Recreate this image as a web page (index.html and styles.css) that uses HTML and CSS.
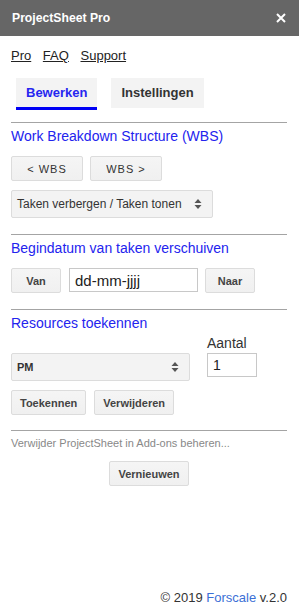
FILE: index.html
```html
<!DOCTYPE html>
<html>
<head>
  <title>ProjectSheet Pro</title>
  <link rel="stylesheet" href="styles.css">
</head>
<body>
  <div class="header">
    <span class="header-title">ProjectSheet Pro</span>
    <svg class="close" width="10" height="10" viewBox="0 0 10 10">
      <path d="M1 1 L9 9 M9 1 L1 9" stroke="#fff" stroke-width="2"/>
    </svg>
  </div>

  <div class="content">
    <div class="links">
      <a href="#">Pro</a>
      <a href="#">FAQ</a>
      <a href="#">Support</a>
    </div>

    <div class="tabs">
      <div class="tab active">Bewerken</div>
      <div class="tab">Instellingen</div>
    </div>

    <div class="divider"></div>
    <h3 class="section-title">Work Breakdown Structure (WBS)</h3>
    <div class="row">
      <button class="btn btn-wbs">&lt; WBS</button>
      <button class="btn btn-wbs">WBS &gt;</button>
    </div>
    <div class="select select-wbs">
      <span>Taken verbergen / Taken tonen</span>
      <svg width="8" height="12" viewBox="0 0 8 12">
        <path d="M4 1 L7.5 5 L0.5 5 Z M4 11 L7.5 7 L0.5 7 Z" fill="#555"/>
      </svg>
    </div>

    <div class="divider"></div>
    <h3 class="section-title">Begindatum van taken verschuiven</h3>
    <div class="row">
      <button class="btn btn-small">Van</button>
      <input class="input input-date" type="text" value="dd-mm-jjjj">
      <button class="btn btn-small">Naar</button>
    </div>

    <div class="divider"></div>
    <h3 class="section-title tight">Resources toekennen</h3>
    <div class="resource-row">
      <div class="resource-left">
        <div class="select select-pm">
          <span>PM</span>
          <svg width="8" height="12" viewBox="0 0 8 12">
            <path d="M4 1 L7.5 5 L0.5 5 Z M4 11 L7.5 7 L0.5 7 Z" fill="#555"/>
          </svg>
        </div>
      </div>
      <div class="resource-right">
        <label class="amount-label">Aantal</label>
        <input class="input input-amount" type="text" value="1">
      </div>
    </div>
    <div class="row row-assign">
      <button class="btn">Toekennen</button>
      <button class="btn">Verwijderen</button>
    </div>

    <div class="divider"></div>
    <p class="note">Verwijder ProjectSheet in Add-ons beheren...</p>
    <div class="center">
      <button class="btn">Vernieuwen</button>
    </div>
  </div>

  <div class="footer">
    &copy; 2019 <a href="#">Forscale</a> v.2.0
  </div>
</body>
</html>
```

FILE: styles.css
```css
html, body {
  height: 100%;
}
body {
  margin: 0;
  font-family: "Liberation Sans", Arial, sans-serif;
  color: #222;
  background: #fff;
  display: flex;
  flex-direction: column;
}
.header {
  height: 36px;
  background: #666;
  display: flex;
  align-items: center;
  justify-content: space-between;
  padding: 0 13px 0 12px;
  flex-shrink: 0;
}
.header-title {
  color: #fff;
  font-weight: bold;
  font-size: 12.2px;
}
.content {
  padding: 12px 12px 0 11px;
}
.links {
  font-size: 13px;
  line-height: 16px;
}
.links a {
  color: #222;
  margin-right: 8px;
}
.tabs {
  display: flex;
  align-items: flex-start;
  gap: 14px;
  margin: 14px 0 12px 5px;
}
.tab {
  height: 30px;
  line-height: 30px;
  padding: 0 10px;
  background: #f3f3f3;
  font-size: 13px;
  font-weight: bold;
  color: #333;
  box-sizing: border-box;
}
.tab.active {
  color: #2626f0;
  border-bottom: 3px solid #0000f5;
  height: 32px;
  line-height: 29px;
}
.divider {
  border-top: 1px solid #a4a4a4;
  margin-bottom: 5px;
}
.section-title {
  margin: 0 0 12px 0;
  font-size: 14px;
  line-height: 16px;
  font-weight: normal;
  color: #2323ee;
}
.section-title.tight {
  margin-bottom: 4px;
}
.row {
  display: flex;
  gap: 7px;
  margin-bottom: 16px;
}
.btn {
  height: 25px;
  padding: 0 8px;
  background: linear-gradient(#f5f5f5, #f0f0f0);
  border: 1px solid #dcdcdc;
  border-radius: 2px;
  font-family: "Liberation Sans", Arial, sans-serif;
  font-size: 11px;
  font-weight: bold;
  color: #444;
  box-sizing: border-box;
}
.btn-wbs {
  width: 72px;
  font-weight: normal;
  letter-spacing: 1px;
  color: #333;
}
.btn-small {
  min-width: 50px;
}
.row .btn-wbs + .btn-wbs {
  margin-left: 0;
}
.select {
  display: flex;
  align-items: center;
  justify-content: space-between;
  height: 28px;
  padding: 0 10px 0 5px;
  background: #f3f3f3;
  border: 1px solid #dcdcdc;
  border-radius: 2px;
  box-sizing: border-box;
  font-size: 12px;
  color: #333;
}
.select-wbs {
  width: 202px;
  margin: -7px 0 16px 0;
}
.select-pm {
  width: 179px;
  font-size: 11px;
  font-weight: bold;
}
.input {
  height: 24px;
  border: 1px solid #c8c8c8;
  border-radius: 0;
  box-sizing: border-box;
  font-family: "Liberation Sans", Arial, sans-serif;
  color: #222;
  padding: 0 5px;
  outline: none;
}
.input-date {
  width: 129px;
  font-size: 15px;
  margin-left: 1px;
}
.input-amount {
  width: 50px;
  font-size: 14px;
}
.resource-row {
  display: flex;
  gap: 17px;
}
.resource-left {
  padding-top: 18px;
}
.resource-right {
  display: flex;
  flex-direction: column;
  gap: 2px;
}
.amount-label {
  font-size: 14px;
  line-height: 16px;
  color: #333;
}
.row-assign {
  margin-top: 9px;
  gap: 8px;
  margin-bottom: 15px;
}
.note {
  margin: 5px 0 11px 0;
  font-size: 11px;
  line-height: 14px;
  color: #888;
}
.center {
  display: flex;
  justify-content: center;
}
.footer {
  margin-top: auto;
  text-align: right;
  padding: 0 12px 7px 0;
  font-size: 13px;
  line-height: 16px;
  color: #333;
}
.footer a {
  color: #3b6fd6;
  text-decoration: none;
}
```
